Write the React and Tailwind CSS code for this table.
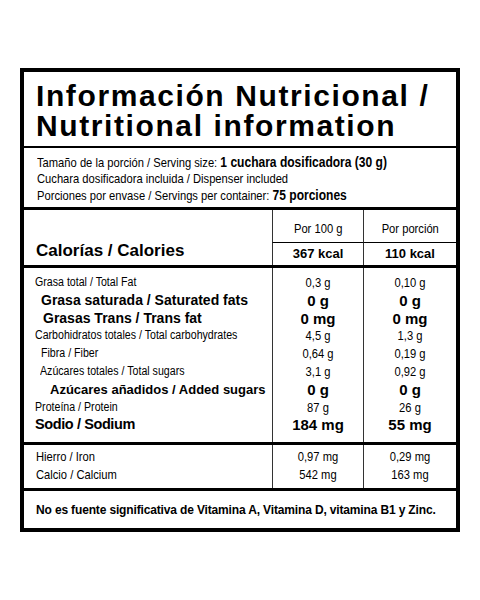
import React from 'react';

const rows = [
  { label: 'Grasa total / Total Fat', a: '0,3 g', b: '0,10 g', kind: 'reg', pad: 'pl-[11px]' },
  { label: 'Grasa saturada / Saturated fats', a: '0 g', b: '0 g', kind: 'bold', pad: 'pl-[17px]' },
  { label: 'Grasas Trans / Trans fat', a: '0 mg', b: '0 mg', kind: 'bold', pad: 'pl-[19px]' },
  { label: 'Carbohidratos totales / Total carbohydrates', a: '4,5 g', b: '1,3 g', kind: 'reg', pad: 'pl-[11px]' },
  { label: 'Fibra / Fiber', a: '0,64 g', b: '0,19 g', kind: 'reg', pad: 'pl-[17px]' },
  { label: 'Azúcares totales / Total sugars', a: '3,1 g', b: '0,92 g', kind: 'reg', pad: 'pl-[16px]' },
  { label: 'Azúcares añadidos / Added sugars', a: '0 g', b: '0 g', kind: 'added', pad: 'pl-[26px]' },
  { label: 'Proteína / Protein', a: '87 g', b: '26 g', kind: 'reg', pad: 'pl-[11px]' },
  { label: 'Sodio / Sodium', a: '184 mg', b: '55 mg', kind: 'big', pad: 'pl-[11px]' },
];

// regular copy is a condensed face in the label, squeeze Arial to fit
const labelCls = {
  reg: 'text-[12.5px] origin-left scale-x-[0.85]',
  bold: 'font-bold text-[14px]',
  added: 'font-bold text-[13px]',
  big: 'font-bold text-[14.5px] tracking-[-0.4px]',
};

const valueCls = {
  reg: 'text-[13px] scale-x-[0.86]',
  bold: 'font-bold text-[15px]',
  added: 'font-bold text-[15px]',
  big: 'font-bold text-[15px]',
};

export default function App() {
  return (
    <div className="min-h-screen bg-white pt-[68px] pl-[20px] text-black font-['Liberation_Sans',Arial,sans-serif]">
      <div className="w-[440px] border-4 border-black">
        {/* title */}
        <div className="h-[76px] border-b-2 border-black pl-[12px] pt-[9px]">
          <h1 className="text-[30px] font-bold leading-[30px] tracking-[1.6px]">
            <span className="block">Información Nutricional /</span>
            <span className="block">Nutritional information</span>
          </h1>
        </div>

        {/* serving */}
        <div className="h-[62px] border-b-[3px] border-black pl-[13px] pt-[6px] text-[13px] leading-[16px]">
          <p className="origin-left scale-x-[0.86] whitespace-nowrap">
            Tamaño de la porción / Serving size:{' '}
            <span className="font-bold text-[14px]">1 cuchara dosificadora (30 g)</span>
          </p>
          <p className="origin-left scale-x-[0.86] whitespace-nowrap">Cuchara dosificadora incluida / Dispenser included</p>
          <p className="origin-left scale-x-[0.86] whitespace-nowrap">
            Porciones por envase / Servings per container:{' '}
            <span className="font-bold text-[14px]">75 porciones</span>
          </p>
        </div>

        {/* header */}
        <div className="h-[58px] border-b-[3px] border-black grid grid-cols-[248px_91px_93px] grid-rows-[33px_22px]">
          <div className="row-span-2 flex items-end pl-[12px] pb-[4px]">
            <span className="text-[17px] font-bold leading-[20px]">Calorías / Calories</span>
          </div>
          <div className="border-l border-[#333] border-b border-b-black flex items-end justify-center pb-[5px] text-[13px] leading-[16px]">
            <span className="block scale-x-[0.86]">Por 100 g</span>
          </div>
          <div className="border-l border-[#333] border-b border-b-black flex items-end justify-center pb-[5px] text-[13px] leading-[16px]">
            <span className="block scale-x-[0.86]">Por porción</span>
          </div>
          <div className="border-l border-[#333] flex items-center justify-center text-[13px] font-bold leading-[22px]">
            367 kcal
          </div>
          <div className="border-l border-[#333] flex items-center justify-center text-[13px] font-bold leading-[22px]">
            110 kcal
          </div>
        </div>

        {/* nutrients */}
        <div className="h-[177px] border-b-[3px] border-black grid grid-cols-[248px_91px_93px]">
          <div className="pt-[6px]">
            {rows.map((r) => (
              <div key={r.label} className={`h-[17.8px] ${r.pad}`}>
                <div className={`leading-[17.8px] whitespace-nowrap ${labelCls[r.kind]}`}>{r.label}</div>
              </div>
            ))}
          </div>
          <div className="border-l border-[#333] pt-[6px]">
            {rows.map((r) => (
              <div key={r.label} className={`h-[17.8px] leading-[17.8px] text-center ${valueCls[r.kind]}`}>
                {r.a}
              </div>
            ))}
          </div>
          <div className="border-l border-[#333] pt-[6px]">
            {rows.map((r) => (
              <div key={r.label} className={`h-[17.8px] leading-[17.8px] text-center ${valueCls[r.kind]}`}>
                {r.b}
              </div>
            ))}
          </div>
        </div>

        {/* minerals */}
        <div className="h-[46px] border-b-[3px] border-black grid grid-cols-[248px_91px_93px] text-[13px] leading-[18px]">
          <div className="pt-[3px] pl-[12px]">
            <div className="origin-left scale-x-[0.86]">Hierro / Iron</div>
            <div className="origin-left scale-x-[0.86]">Calcio / Calcium</div>
          </div>
          <div className="border-l border-[#333] pt-[3px] text-center">
            <div className="scale-x-[0.86]">0,97 mg</div>
            <div className="scale-x-[0.86]">542 mg</div>
          </div>
          <div className="border-l border-[#333] pt-[3px] text-center">
            <div className="scale-x-[0.86]">0,29 mg</div>
            <div className="scale-x-[0.86]">163 mg</div>
          </div>
        </div>

        {/* footer */}
        <div className="h-[37px] flex items-center pl-[12px] pt-[1px]">
          <p className="font-bold text-[12px] tracking-[-0.15px] whitespace-nowrap">
            No es fuente significativa de Vitamina A, Vitamina D, vitamina B1 y Zinc.
          </p>
        </div>
      </div>
    </div>
  );
}
